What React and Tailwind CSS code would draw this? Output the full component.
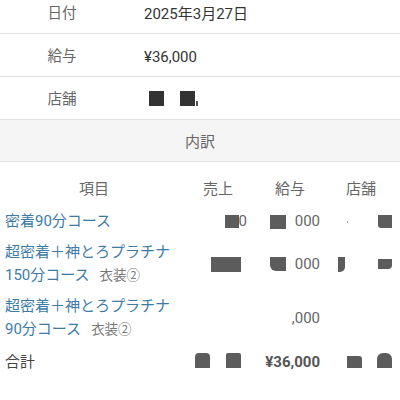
import React from 'react';

const FONT = { fontFamily: 'Roboto, "Noto Sans CJK JP", "Noto Sans", sans-serif' };

const Block = ({ w = 'w-[15px]', h = 'h-[14px]', c = 'bg-[#5c5c5c]', extra = '' }) => (
  <span className={`inline-block ${w} ${h} ${c} ${extra}`}></span>
);

function InfoRow({ label, children }) {
  return (
    <div className="flex h-[43px] items-center border-b border-[#e2e2e2] pt-[4px]">
      <div className="w-[124px] text-center text-[14.5px] text-[#666]">{label}</div>
      <div className="pl-[20px] text-[15px] text-[#333]">{children}</div>
    </div>
  );
}

function Item({ lines, note }) {
  return (
    <div className="pl-[5px] text-[15px] leading-[23px] text-[#3d7ba6]">
      {lines.map((l, i) => (
        <div key={i}>
          {l}
          {i === lines.length - 1 && note && (
            <span className="ml-[10px] text-[13.5px] text-[#777]">{note}</span>
          )}
        </div>
      ))}
    </div>
  );
}

export default function App() {
  return (
    <div className="h-[400px] w-[400px] overflow-hidden bg-white" style={FONT}>
      <div className="-mt-[9px]">
        <InfoRow label="日付">2025年3月27日</InfoRow>
        <InfoRow label="給与">¥36,000</InfoRow>
        <InfoRow label="店舗">
          <span className="-mt-[4px] flex items-center gap-[16px] pl-[5px]">
            <Block c="bg-[#333]" h="h-[15px]" />
            <span className="flex items-end">
              <Block c="bg-[#333]" h="h-[15px]" />
              <span className="ml-[1px] h-[5px] w-[2px] bg-[#555]"></span>
            </span>
          </span>
        </InfoRow>
      </div>

      <div className="flex h-[42px] items-center justify-center border-b border-[#e2e2e2] bg-[#f5f5f5] pt-[4px] text-[15px] text-[#666]">
        内訳
      </div>

      <div className="grid grid-cols-[188px_60px_72px_72px] text-[15px] leading-[23px] text-[#666]">
        <div className="pt-[16px] pb-[5px] text-center">項目</div>
        <div className="pt-[16px] pb-[5px] text-center">売上</div>
        <div className="pt-[16px] pb-[5px] pl-[12px] text-center">給与</div>
        <div className="pt-[16px] pb-[5px] pl-[10px] text-center">店舗</div>

        <div className="py-[4px]"><Item lines={['密着90分コース']} /></div>
        <div className="flex items-center justify-end pr-[1px]">
          <Block w="w-[14px]" h="h-[13px]" />
          <span>0</span>
        </div>
        <div className="flex items-center justify-end gap-[9px]">
          <Block w="w-[16px]" h="h-[14px]" />
          <span>000</span>
        </div>
        <div className="flex items-center justify-end gap-[30px]">
          <span className="h-[2px] w-[1px] bg-[#999]"></span>
          <Block w="w-[14px]" h="h-[13px]" extra="rounded-bl-[3px]" />
        </div>

        <div className="py-[4px]"><Item lines={['超密着＋神とろプラチナ', '150分コース']} note="衣装②" /></div>
        <div className="flex items-center justify-end pr-[7px]">
          <Block w="w-[30px]" h="h-[15px]" />
        </div>
        <div className="flex items-center justify-end gap-[9px]">
          <Block w="w-[16px]" h="h-[14px]" extra="rounded-bl-[6px]" />
          <span>000</span>
        </div>
        <div className="flex items-center justify-end gap-[33px]">
          <Block w="w-[7px]" h="h-[15px]" extra="rounded-br-[5px]" />
          <Block w="w-[14px]" h="h-[10px]" extra="rounded-br-[4px]" />
        </div>

        <div className="py-[4px]"><Item lines={['超密着＋神とろプラチナ', '90分コース']} note="衣装②" /></div>
        <div></div>
        <div className="flex items-center justify-end">
          <span>,000</span>
        </div>
        <div></div>

        <div className="flex items-center pt-[6px] pb-[2px] pl-[5px] text-[#444]">合計</div>
        <div className="flex items-center justify-end gap-[16px] pr-[7px]">
          <Block w="w-[15px]" h="h-[15px]" extra="rounded-t-[4px]" />
          <Block w="w-[15px]" h="h-[15px]" extra="rounded-t-[2px]" />
        </div>
        <div className="flex items-center justify-end pt-[4px] font-bold text-[#555]">¥36,000</div>
        <div className="flex items-center justify-end gap-[15px]">
          <Block w="w-[15px]" h="h-[12px]" extra="mt-[3px] rounded-tr-[3px]" />
          <Block w="w-[15px]" h="h-[15px]" extra="rounded-t-[6px]" />
        </div>
      </div>

      <div className="mt-[34px] h-[10px] border-t border-[#e2e2e2] bg-[#f5f5f5]"></div>
    </div>
  );
}
